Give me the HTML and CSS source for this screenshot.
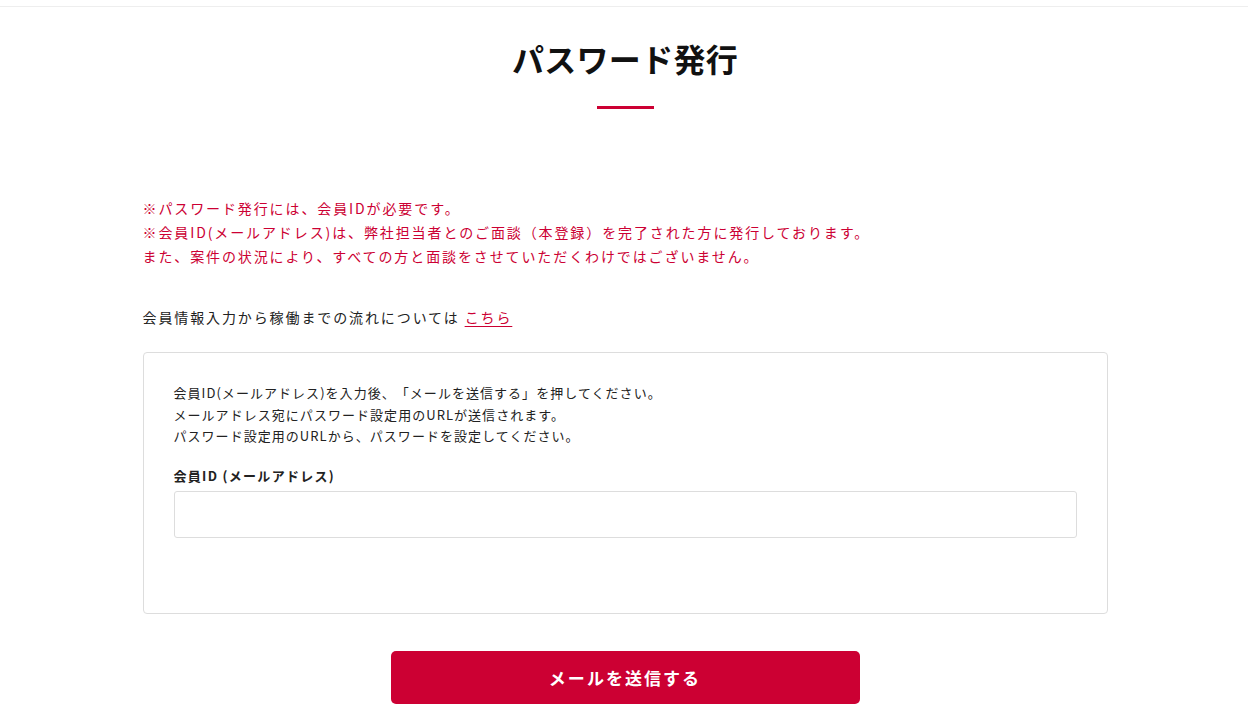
FILE: index.html
```html
<!DOCTYPE html>
<html lang="ja">
<head>
    <meta charset="UTF-8">
    <meta name="viewport" content="width=device-width, initial-scale=1.0">
    <title>パスワード発行</title>
    <link rel="stylesheet" href="styles.css">
</head>
<body>
    <div class="top-bar"></div>

    <main class="page">
        <div class="page-header">
            <h1>パスワード発行</h1>
            <span class="header-line"></span>
        </div>

        <div class="notes">
            <p>※パスワード発行には、会員IDが必要です。</p>
            <p>※会員ID(メールアドレス)は、弊社担当者とのご面談（本登録）を完了された方に発行しております。</p>
            <p>また、案件の状況により、すべての方と面談をさせていただくわけではございません。</p>
        </div>

        <p class="flow-link">会員情報入力から稼働までの流れについては <a href="#">こちら</a></p>

        <form class="reset-form" id="resetForm">
            <div class="form-box">
                <div class="form-intro">
                    <p>会員ID(メールアドレス)を入力後、「メールを送信する」を押してください。</p>
                    <p>メールアドレス宛にパスワード設定用のURLが送信されます。</p>
                    <p>パスワード設定用のURLから、パスワードを設定してください。</p>
                </div>

                <div class="form-group">
                    <label for="memberId">会員ID (メールアドレス)</label>
                    <input type="email" id="memberId" name="memberId">
                </div>
            </div>

            <div class="form-actions">
                <button type="submit" class="send-button">メールを送信する</button>
            </div>
        </form>
    </main>
</body>
</html>
```

FILE: styles.css
```css
* {
    margin: 0;
    padding: 0;
    box-sizing: border-box;
}

body {
    font-family: "Noto Sans CJK JP", "Noto Sans", sans-serif;
    color: #222;
    background: #fff;
    text-spacing-trim: space-all;
}

.top-bar {
    height: 7px;
    border-bottom: 1px solid #eeeeee;
}

.page {
    width: 965px;
    margin: 0 auto;
    position: relative;
    left: 1px;
}

.page-header {
    display: flex;
    flex-direction: column;
    align-items: center;
    padding-top: 27px;
}

.page-header h1 {
    font-size: 32px;
    font-weight: 700;
    line-height: 48px;
    letter-spacing: 0.01em;
    color: #111;
}

.header-line {
    display: block;
    width: 57px;
    height: 3px;
    margin-top: 24px;
    background: #cc0033;
}

.notes {
    margin-top: 88px;
    color: #cc0033;
    font-size: 14px;
    line-height: 1.7;
    letter-spacing: 0.135em;
}

.flow-link {
    margin-top: 38px;
    font-size: 14px;
    line-height: 1.7;
    letter-spacing: 0.135em;
}

.flow-link a {
    color: #cc0033;
    text-underline-offset: 3px;
}

.reset-form {
    margin-top: 22px;
}

.form-box {
    border: 1px solid #dddddd;
    border-radius: 4px;
    padding: 29px 30px 75px;
}

.form-intro {
    font-size: 13px;
    line-height: 1.65;
    letter-spacing: 0.08em;
}

.form-group {
    margin-top: 18px;
}

.form-group label {
    display: block;
    font-size: 13px;
    font-weight: 700;
    line-height: 1.65;
    letter-spacing: 0.1em;
    margin-bottom: 5px;
}

.form-group input {
    width: 100%;
    height: 47px;
    border: 1px solid #dddddd;
    border-radius: 3px;
    padding: 0 12px;
    font-size: 14px;
    font-family: inherit;
}

.form-group input:focus {
    outline: none;
    border-color: #cc0033;
}

.form-actions {
    display: flex;
    justify-content: center;
    margin-top: 37px;
}

.send-button {
    width: 469px;
    height: 53px;
    border: none;
    border-radius: 5px;
    background: #cc0033;
    color: #fff;
    font-family: inherit;
    font-size: 17px;
    font-weight: 700;
    letter-spacing: 0.12em;
    cursor: pointer;
}
```
